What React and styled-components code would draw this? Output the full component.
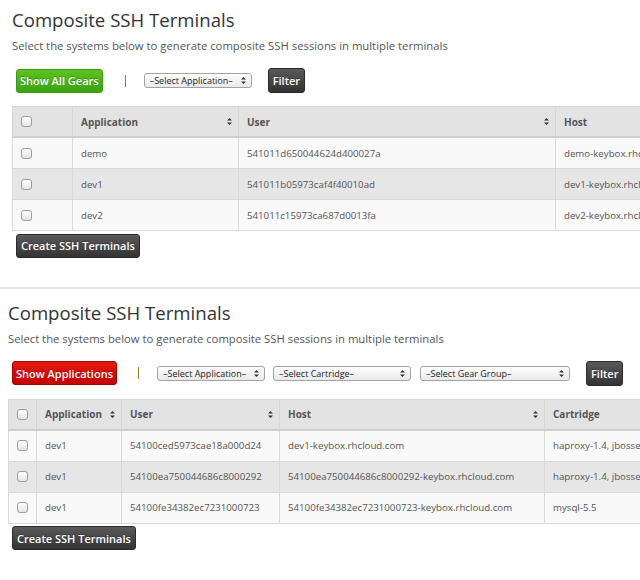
import styled, { createGlobalStyle } from "styled-components";

const GlobalStyle = createGlobalStyle`
  html, body {
    margin: 0;
    padding: 0;
    background: #fff;
    overflow: hidden;
  }
  body {
    font-family: "Open Sans", "Liberation Sans", sans-serif;
    color: #333;
  }
`

const Page = styled.div`
  width: 640px;
  height: 580px;
  overflow: hidden;
`

const Section = styled.section`
  padding: ${props => props.top}px 0 0 ${props => props.inset}px;
`

const Title = styled.h1`
  margin: 0;
  font-size: 18.6px;
  line-height: 30px;
  font-weight: 400;
  color: #333;
`

const Subtitle = styled.p`
  margin: 3px 0 0;
  font-size: 11.3px;
  line-height: 16px;
  color: #555;
`

const Toolbar = styled.div`
  display: flex;
  align-items: center;
  height: 27px;
  margin-top: 13px;
  margin-left: 4px;
`

const Button = styled.button`
  font-family: "Open Sans", "Liberation Sans", sans-serif;
  font-size: 11px;
  font-weight: 600;
  color: #fff;
  border: 1px solid ${props => props.edge};
  border-radius: 3px;
  background: linear-gradient(${props => props.light}, ${props => props.dark});
  height: ${props => props.h || 24}px;
  padding: 0 ${props => props.px || 5}px;
  margin: 0;
  white-space: nowrap;
  text-shadow: 0 -1px 0 rgba(0, 0, 0, 0.25);
  cursor: pointer;
`

const Pipe = styled.span`
  width: 1px;
  height: 12px;
  background: #8b7d2a;
  margin: 0 ${props => props.after}px 0 ${props => props.before}px;
`

const Select = styled.div`
  display: flex;
  align-items: center;
  justify-content: space-between;
  box-sizing: border-box;
  width: ${props => props.w}px;
  height: 15px;
  margin-right: ${props => props.gap}px;
  padding: 0 5px 0 5px;
  border: 1px solid #a3a3a3;
  border-radius: 3px;
  background: linear-gradient(#fefefe, #e9e9e9);
  font-size: 9px;
  color: #222;
  white-space: nowrap;
`

const Arrows = ({ size = 7 }) => (
  <svg width="5" height={size} viewBox="0 0 5 7">
    <path d="M2.5 0 L5 2.6 L0 2.6 Z M2.5 7 L5 4.4 L0 4.4 Z" fill="#333" />
  </svg>
)

const Table = styled.table`
  margin-top: 12px;
  border-collapse: collapse;
  width: ${props => props.w}px;
  table-layout: fixed;
  font-size: 9.7px;
  color: #555;
`

const Head = styled.th`
  background: #e3e3e3;
  height: 29px;
  border: 1px solid #d6d6d6;
  border-bottom: 2px solid #cfcfcf;
  padding: 0 6px 0 ${props => props.pl || 8}px;
  text-align: left;
  font-size: 10px;
  font-weight: 700;
  color: #555;
`

const HeadInner = styled.div`
  display: flex;
  align-items: center;
  justify-content: space-between;
`

const Row = styled.tr`
  background: ${props => (props.striped ? "#e6e6e6" : "#f9f9f9")};
`

const Cell = styled.td`
  height: 30px;
  border: 1px solid #d9d9d9;
  padding: 0 0 0 ${props => props.pl || 8}px;
  white-space: nowrap;
  overflow: hidden;
`

const Check = styled.span`
  display: block;
  width: 9px;
  height: 9px;
  border: 1px solid #9c9c9c;
  border-radius: 3px;
  background: linear-gradient(#ffffff, #e4e4e4);
`

const Footer = styled.div`
  margin-top: 2px;
  margin-left: 4px;
`

const Divider = styled.hr`
  margin: 29px 0 0 0;
  border: 0;
  height: 2px;
  background: #e2e2e2;
`

const SortHead = ({ children, pl }) => (
  <Head pl={pl}>
    <HeadInner>
      {children}
      <Arrows size={7} />
    </HeadInner>
  </Head>
)

const TerminalTable = ({ cols, widths, rows, tableWidth, checkPad }) => (
  <Table w={tableWidth}>
    <colgroup>
      {widths.map((w, i) => <col key={i} style={{ width: w }} />)}
    </colgroup>
    <thead>
      <tr>
        <Head pl={checkPad}><Check /></Head>
        {cols.map((c, i) =>
          c.sort ? <SortHead key={i}>{c.label}</SortHead> : <Head key={i}>{c.label}</Head>
        )}
      </tr>
    </thead>
    <tbody>
      {rows.map((r, i) => (
        <Row key={i} striped={i === 1}>
          <Cell pl={checkPad}><Check /></Cell>
          {r.map((v, j) => <Cell key={j}>{v}</Cell>)}
        </Row>
      ))}
    </tbody>
  </Table>
)

const dark = { edge: "#2a2a2a", light: "#5a5a5a", dark: "#333333" }

export default function App() {
  return (
    <Page>
      <GlobalStyle />
      <Section top={5} inset={12}>
        <Title>Composite SSH Terminals</Title>
        <Subtitle>Select the systems below to generate composite SSH sessions in multiple terminals</Subtitle>
        <Toolbar>
          <Button edge="#3f9a12" light="#5cc41e" dark="#3aa30e" px={3}>Show All Gears</Button>
          <Pipe before={22} after={18} />
          <Select w={108} gap={16}>–Select Application–<Arrows /></Select>
          <Button {...dark} h={25} px={4}>Filter</Button>
        </Toolbar>
        <TerminalTable
          tableWidth={760}
          widths={[60, 166, 317, 217]}
          checkPad={8}
          cols={[
            { label: "Application", sort: true },
            { label: "User", sort: true },
            { label: "Host" },
          ]}
          rows={[
            ["demo", "541011d650044624d400027a", "demo-keybox.rhcloud.com"],
            ["dev1", "541011b05973caf4f40010ad", "dev1-keybox.rhcloud.com"],
            ["dev2", "541011c15973ca687d0013fa", "dev2-keybox.rhcloud.com"],
          ]}
        />
        <Footer>
          <Button {...dark} px={4}>Create SSH Terminals</Button>
        </Footer>
      </Section>
      <Divider />
      <Section top={9} inset={8}>
        <Title>Composite SSH Terminals</Title>
        <Subtitle>Select the systems below to generate composite SSH sessions in multiple terminals</Subtitle>
        <Toolbar>
          <Button edge="#a30000" light="#e41a0f" dark="#c40000" px={3}>Show Applications</Button>
          <Pipe before={21} after={18} />
          <Select w={108} gap={8}>–Select Application–<Arrows /></Select>
          <Select w={138} gap={9}>–Select Cartridge–<Arrows /></Select>
          <Select w={150} gap={16}>–Select Gear Group–<Arrows /></Select>
          <Button {...dark} h={25} px={4}>Filter</Button>
        </Toolbar>
        <TerminalTable
          tableWidth={720}
          widths={[28, 85, 158, 265, 184]}
          checkPad={8}
          cols={[
            { label: "Application", sort: true },
            { label: "User", sort: true },
            { label: "Host", sort: true },
            { label: "Cartridge" },
          ]}
          rows={[
            ["dev1", "54100ced5973cae18a000d24", "dev1-keybox.rhcloud.com", "haproxy-1.4, jbossews-2.0"],
            ["dev1", "54100ea750044686c8000292", "54100ea750044686c8000292-keybox.rhcloud.com", "haproxy-1.4, jbossews-2.0"],
            ["dev1", "54100fe34382ec7231000723", "54100fe34382ec7231000723-keybox.rhcloud.com", "mysql-5.5"],
          ]}
        />
        <Footer>
          <Button {...dark} px={4}>Create SSH Terminals</Button>
        </Footer>
      </Section>
    </Page>
  )
}
